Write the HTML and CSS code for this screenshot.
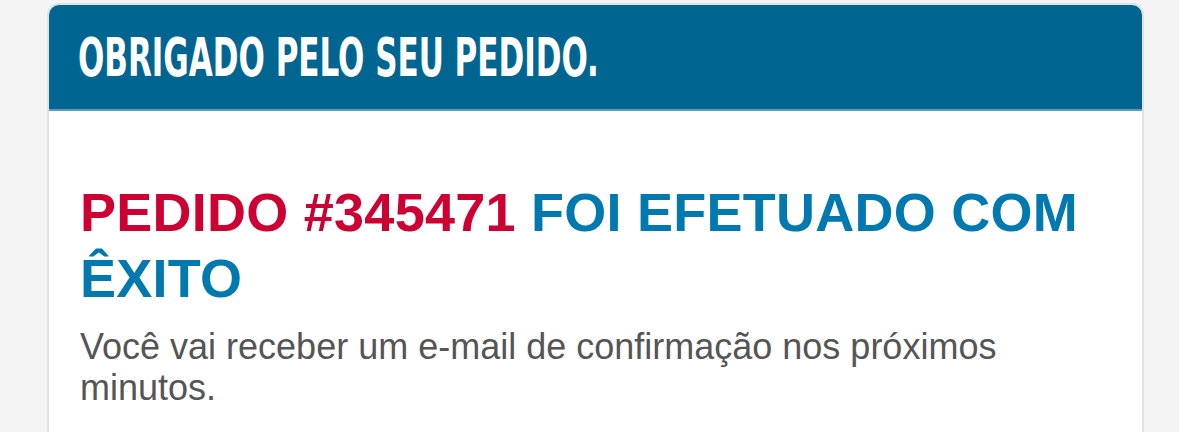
FILE: index.html
```html
<!DOCTYPE html>
<html lang="pt-BR">
<head>
<meta charset="UTF-8">
<meta name="viewport" content="width=device-width, initial-scale=1.0">
<title>Pedido efetuado</title>
<link rel="stylesheet" href="styles.css">
</head>
<body>

<div class="card">
    <div class="card-header">
        <h1 class="thanks">OBRIGADO PELO SEU PEDIDO.</h1>
    </div>
    <div class="card-body">
        <h2 class="order-title"><span class="order-num">PEDIDO #345471</span> FOI EFETUADO COM ÊXITO</h2>
        <p class="order-note">Você vai receber um e-mail de confirmação nos próximos minutos.</p>
    </div>
</div>

</body>
</html>
```

FILE: styles.css
```css
body {
    font-family: "Liberation Sans", Arial, sans-serif;
    background-color: #f4f4f4;
    margin: 0;
    padding: 3px 0 0;
}
.card {
    width: 1093px;
    min-height: 429px;
    margin: 0 0 0 47px;
    background-color: #fff;
    border: 2px solid #e2e2e2;
    border-bottom: none;
    border-radius: 12px 12px 0 0;
    overflow: hidden;
}
.card-header {
    background-color: #006591;
    height: 104px;
    border-bottom: 2px solid #5b9cc0;
    display: flex;
    align-items: center;
    padding-left: 29px;
}
.thanks {
    margin: 0;
    color: #fff;
    font-family: "DejaVu Sans", sans-serif;
    font-stretch: condensed;
    font-weight: bold;
    font-size: 53px;
    transform: scaleX(0.65);
    transform-origin: left center;
    white-space: nowrap;
}
.card-body {
    padding: 68px 30px 0 31px;
}
.order-title {
    margin: 0;
    font-size: 54px;
    line-height: 66px;
    letter-spacing: 0.25px;
    font-weight: bold;
    color: #0079b1;
}
.order-num {
    color: #cc0033;
}
.order-note {
    max-width: 1000px;
    margin: 15px 0 0;
    font-size: 36px;
    line-height: 41px;
    color: #555;
}
```
